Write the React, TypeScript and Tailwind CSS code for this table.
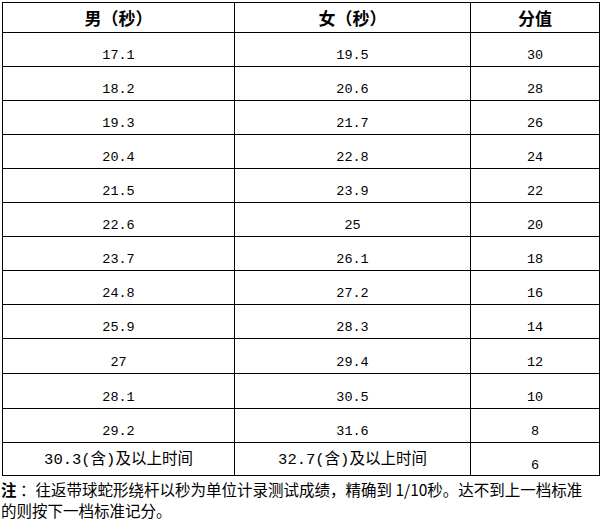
const rows: [string, string, string][] = [
  ["17.1", "19.5", "30"],
  ["18.2", "20.6", "28"],
  ["19.3", "21.7", "26"],
  ["20.4", "22.8", "24"],
  ["21.5", "23.9", "22"],
  ["22.6", "25", "20"],
  ["23.7", "26.1", "18"],
  ["24.8", "27.2", "16"],
  ["25.9", "28.3", "14"],
  ["27", "29.4", "12"],
  ["28.1", "30.5", "10"],
  ["29.2", "31.6", "8"],
];

// rows 10 and 11 are a pixel taller in the source sheet
const rowHeights = ["h-[34px]", "h-[34px]", "h-[34px]", "h-[34px]", "h-[34px]", "h-[34px]", "h-[34px]", "h-[34px]", "h-[34px]", "h-[35px]", "h-[35px]", "h-[34px]"];

const mono = "font-['Liberation_Mono','Noto_Sans_CJK_SC',monospace] text-[13.5px]";
const cjk = "font-['Noto_Sans_CJK_SC','Liberation_Sans',sans-serif]";

export default function App() {
  return (
    <div className="h-[520px] w-[601px] overflow-hidden bg-white pt-[2px] text-black">
      <div className="ml-[2px] grid w-[598px] grid-cols-[232px_236px_130px]">
        {["男（秒）", "女（秒）", "分值"].map((h, i) => (
          <div
            key={h}
            className={`flex h-[30px] items-center justify-center border-l border-t border-black text-[17px] leading-none font-bold ${cjk} ${i === 2 ? "border-r" : ""}`}
          >
            {h}
          </div>
        ))}

        {rows.map((r, ri) =>
          r.map((v, ci) => (
            <div
              key={`${ri}-${ci}`}
              className={`flex ${rowHeights[ri]} items-end justify-center border-l border-t border-black pb-[2px] leading-4 ${mono} ${ci === 2 ? "border-r" : ""}`}
            >
              {v}
            </div>
          )),
        )}

        <div className={`flex h-[34px] items-center justify-center border-b border-l border-t border-black pt-[2px] leading-4 ${mono} text-[15.5px]`}>
          30.3(含)及以上时间
        </div>
        <div className={`flex h-[34px] items-center justify-center border-b border-l border-t border-black pt-[2px] leading-4 ${mono} text-[15.5px]`}>
          32.7(含)及以上时间
        </div>
        <div className={`flex h-[34px] items-end justify-center border border-black pb-[1px] leading-4 ${mono}`}>
          6
        </div>
      </div>

      <p className={`mt-[3px] whitespace-nowrap pl-px text-[15.5px] leading-[21px] ${cjk}`}>
        <span className="font-bold">注</span> ：往返带球蛇形绕杆以秒为单位计录测试成绩，精确到 1/10秒。达不到上一档标准
        <br />
        的则按下一档标准记分。
      </p>
    </div>
  );
}
